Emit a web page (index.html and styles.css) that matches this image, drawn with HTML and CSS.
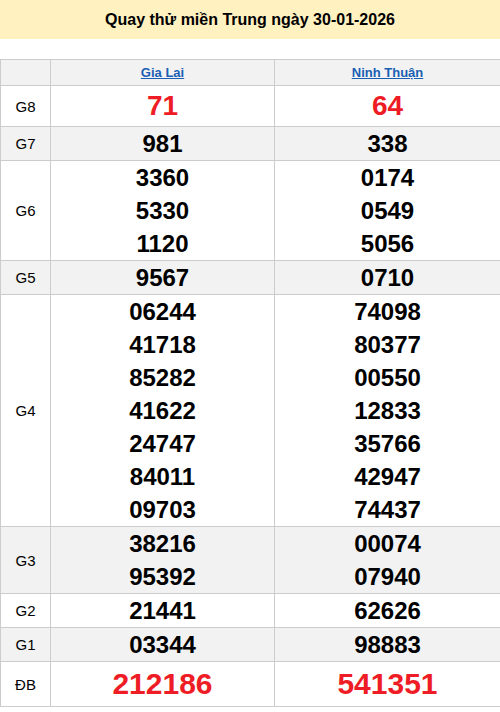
FILE: index.html
```html
<!DOCTYPE html>
<html lang="vi">
<head>
<meta charset="utf-8">
<title>Quay thử miền Trung</title>
<link rel="stylesheet" href="styles.css">
</head>
<body>
<h1 class="title">Quay thử miền Trung ngày 30-01-2026</h1>
<table class="results">
  <colgroup>
    <col class="col-label">
    <col class="col-a">
    <col class="col-b">
  </colgroup>
  <thead>
    <tr class="alt">
      <th class="label"></th>
      <th class="prov"><a href="#">Gia Lai</a></th>
      <th class="prov"><a href="#">Ninh Thuận</a></th>
    </tr>
  </thead>
  <tbody>
    <tr>
      <td class="label">G8</td>
      <td><div class="num big">71</div></td>
      <td><div class="num big">64</div></td>
    </tr>
    <tr class="alt">
      <td class="label">G7</td>
      <td><div class="num">981</div></td>
      <td><div class="num">338</div></td>
    </tr>
    <tr>
      <td class="label">G6</td>
      <td><div class="num">3360</div><div class="num">5330</div><div class="num">1120</div></td>
      <td><div class="num">0174</div><div class="num">0549</div><div class="num">5056</div></td>
    </tr>
    <tr class="alt">
      <td class="label">G5</td>
      <td><div class="num">9567</div></td>
      <td><div class="num">0710</div></td>
    </tr>
    <tr>
      <td class="label">G4</td>
      <td><div class="num">06244</div><div class="num">41718</div><div class="num">85282</div><div class="num">41622</div><div class="num">24747</div><div class="num">84011</div><div class="num">09703</div></td>
      <td><div class="num">74098</div><div class="num">80377</div><div class="num">00550</div><div class="num">12833</div><div class="num">35766</div><div class="num">42947</div><div class="num">74437</div></td>
    </tr>
    <tr class="alt">
      <td class="label">G3</td>
      <td><div class="num">38216</div><div class="num">95392</div></td>
      <td><div class="num">00074</div><div class="num">07940</div></td>
    </tr>
    <tr>
      <td class="label">G2</td>
      <td><div class="num">21441</div></td>
      <td><div class="num">62626</div></td>
    </tr>
    <tr class="alt">
      <td class="label">G1</td>
      <td><div class="num">03344</div></td>
      <td><div class="num">98883</div></td>
    </tr>
    <tr>
      <td class="label">ĐB</td>
      <td><div class="num special">212186</div></td>
      <td><div class="num special">541351</div></td>
    </tr>
  </tbody>
</table>
</body>
</html>
```
FILE: styles.css
```css
html, body {
  margin: 0;
  padding: 0;
  background: #ffffff;
  font-family: "Liberation Sans", Arial, sans-serif;
  color: #000;
}

.title {
  margin: 0 0 20px 0;
  height: 39px;
  line-height: 39px;
  background: #fff2c0;
  text-align: center;
  font-size: 16px;
  font-weight: bold;
}

.results {
  width: 500px;
  border-collapse: collapse;
  table-layout: fixed;
}

.col-label { width: 50px; }
.col-a { width: 224px; }
.col-b { width: 226px; }

.results th,
.results td {
  border: 1px solid #cccccc;
  padding: 0;
  text-align: center;
  vertical-align: middle;
}

.results .label {
  font-size: 15px;
  font-weight: normal;
}

.results .prov {
  height: 25px;
  font-size: 13px;
  font-weight: bold;
}

.results .prov a {
  color: #1a5fb4;
  text-decoration: underline;
}

.alt {
  background: #f2f2f2;
}

.num {
  font-size: 24px;
  font-weight: bold;
  line-height: 33px;
}

.num.big {
  font-size: 28px;
  line-height: 40px;
  color: #ee1c25;
}

.num.special {
  font-size: 30px;
  line-height: 44px;
  color: #ee1c25;
}
```
